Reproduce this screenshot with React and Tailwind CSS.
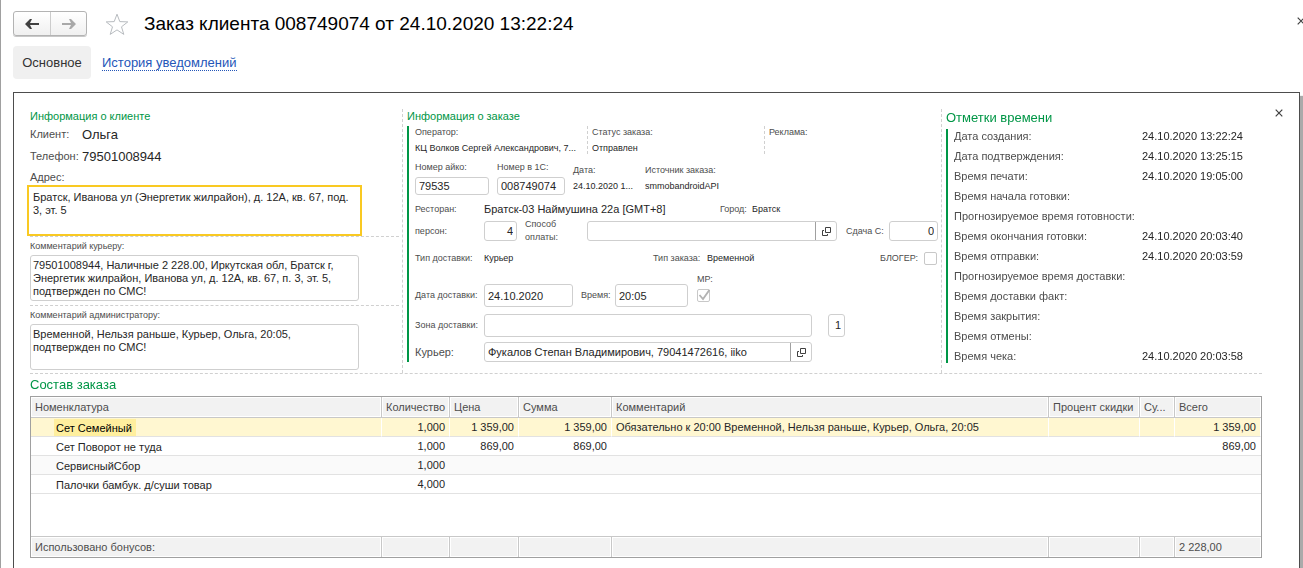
import React from "react";
import clsx from "clsx";

const TIMES = [
  ["Дата создания:", "24.10.2020 13:22:24"],
  ["Дата подтверждения:", "24.10.2020 13:25:15"],
  ["Время печати:", "24.10.2020 19:05:00"],
  ["Время начала готовки:", ""],
  ["Прогнозируемое время готовности:", ""],
  ["Время окончания готовки:", "24.10.2020 20:03:40"],
  ["Время отправки:", "24.10.2020 20:03:59"],
  ["Прогнозируемое время доставки:", ""],
  ["Время доставки факт:", ""],
  ["Время закрытия:", ""],
  ["Время отмены:", ""],
  ["Время чека:", "24.10.2020 20:03:58"],
];

const ROWS = [
  ["Сет Семейный", "1,000", "1 359,00", "1 359,00", "Обязательно к 20:00 Временной, Нельзя раньше, Курьер, Ольга, 20:05", "1 359,00"],
  ["Сет Поворот не туда", "1,000", "869,00", "869,00", "", "869,00"],
  ["СервисныйСбор", "1,000", "", "", "", ""],
  ["Палочки бамбук. д/суши товар", "4,000", "", "", "", ""],
];

const HEADS = ["Номенклатура", "Количество", "Цена", "Сумма", "Комментарий", "Процент скидки", "Су...", "Всего"];

function Arrow({ className }) {
  return (
    <svg viewBox="0 0 14 10" className={clsx("h-[10px] w-[14px]", className)} aria-hidden="true">
      <path d="M0 5 L5 0 H7 L5 4 H14 V6 H5 L7 10 H5 Z" fill="currentColor" />
    </svg>
  );
}

function Cross() {
  return (
    <svg viewBox="0 0 8 8" className="h-2 w-2 shrink-0" aria-hidden="true">
      <path d="M0.7 0.7 L7.3 7.3 M7.3 0.7 L0.7 7.3" stroke="#404040" strokeWidth="1.2" />
    </svg>
  );
}

function Label({ htmlFor, className, children }) {
  return (
    <label htmlFor={htmlFor} className={clsx("shrink-0 text-[#4d4d4d]", className)}>
      {children}
    </label>
  );
}

function Box({ id, value, className }) {
  return (
    <input
      id={id}
      defaultValue={value}
      className={clsx("rounded-[3px] border border-[#cfcfcf] bg-white px-[3px] text-[11px] text-[#262626] outline-none", className)}
    />
  );
}

function PickBox({ id, value, className }) {
  return (
    <div className={clsx("flex h-5 overflow-hidden rounded-[3px] border border-[#cfcfcf] bg-white", className)}>
      <input id={id} defaultValue={value} className="min-w-0 flex-1 px-[3px] text-[11px] text-[#262626] outline-none" />
      <button type="button" aria-label="Открыть" className="flex w-[21px] items-center justify-center border-l border-[#a0a0a0]">
        <svg viewBox="0 0 9 9" className="h-[9px] w-[9px]" fill="none" stroke="#404040" aria-hidden="true">
          <path d="M3.5 0.5 H8.5 V5.5 H3.5 Z M2 3.5 H0.5 V8.5 H5.5 V7" />
        </svg>
      </button>
    </div>
  );
}

function Field({ label, value, className }) {
  return (
    <div className={clsx("min-w-0", className)}>
      <div className="h-4 text-[#4d4d4d]">{label}</div>
      <div className="truncate text-[#262626]">{value}</div>
    </div>
  );
}

export default function App() {
  return (
    <div className="flex min-h-screen flex-col overflow-hidden border-l border-[#a0a0a0] bg-white font-['Liberation_Sans',Arial,sans-serif] text-[11px] leading-[13px] text-[#262626]">
      <header className="flex h-9 items-end pl-3">
        <div className="flex h-[25px] w-[74px] rounded-[3px] border border-[#b3b3b3] bg-gradient-to-b from-white to-[#f0f0f0] shadow-[0_1px_0_#c8c8c8]">
          <button type="button" aria-label="Назад" className="flex w-9 items-center justify-center text-[#404040]">
            <Arrow />
          </button>
          <button type="button" aria-label="Вперёд" className="flex flex-1 items-center justify-center border-l border-[#cccccc] text-[#a8a8a8]">
            <Arrow className="rotate-180" />
          </button>
        </div>
        <button type="button" aria-label="В избранное" className="ml-[18px]">
          <svg viewBox="0 0 24 23" className="h-[23px] w-6" fill="none" stroke="#b8bcc0" aria-hidden="true">
            <path d="M12 1.2 L14.8 8.6 L22.8 8.9 L16.5 13.8 L18.8 21.4 L12 16.9 L5.2 21.4 L7.5 13.8 L1.2 8.9 L9.2 8.6 Z" />
          </svg>
        </button>
        <h1 className="ml-[15px] flex-1 truncate text-[19px] leading-[24px] text-black">Заказ клиента 008749074 от 24.10.2020 13:22:24</h1>
        <button type="button" aria-label="Закрыть" className="-mr-[2px] mb-[11px]">
          <Cross />
        </button>
      </header>

      <nav className="mt-[10px] flex h-[33px] items-center gap-[11px] pl-3 text-[13px] leading-4">
        <a href="#main" className="flex h-full w-[78px] items-center justify-center rounded-[4px] bg-[#f0f0f0] text-[#333333]">Основное</a>
        <a href="#history" className="h-4 border-b border-dotted border-[#2456b8] text-[#2456b8]">История уведомлений</a>
      </nav>

      <main className="relative mr-[3px] ml-3 mt-[13px] flex-1 border border-b-0 border-[#4d4d4d] pt-4 pr-[37px] pb-[10px] pl-4 shadow-[3px_4px_1px_#aaaaaa]">
        <button type="button" aria-label="Закрыть форму" className="absolute top-4 right-4">
          <Cross />
        </button>

        <div className="grid grid-cols-[373fr_539fr_320fr] border-b border-dashed border-[#d0d0d0]">
          <section className="border-r border-dashed border-[#d0d0d0] pr-[3px] pb-[3px]">
            <h2 className="h-[15px] leading-[15px] text-[#009646]">Информация о клиенте</h2>
            <div className="flex h-5 items-center">
              <span className="w-[52px] text-[#4d4d4d]">Клиент:</span>
              <span className="text-[13px]">Ольга</span>
            </div>
            <div className="flex h-6 items-center">
              <span className="w-[52px] text-[#4d4d4d]">Телефон:</span>
              <span className="text-[13px]">79501008944</span>
            </div>
            <Label htmlFor="address" className="block h-[17px] leading-[18px]">Адрес:</Label>
            <div className="-ml-[3px] mr-[37px]">
              <textarea id="address" autoFocus defaultValue="Братск, Иванова ул (Энергетик жилрайон), д. 12А, кв. 67, под. 3, эт. 5" className="block h-[51px] w-full resize-none border-2 border-[#f9c922] p-1 outline-none" />
            </div>
            <div className="border-t border-dashed border-[#d0d0d0]">
              <Label htmlFor="courier-note" className="block h-[18px] text-[9px] leading-[18px]">Комментарий курьеру:</Label>
              <div className="mr-10">
                <textarea id="courier-note" defaultValue="79501008944, Наличные 2 228.00, Иркутская обл, Братск г, Энергетик жилрайон, Иванова ул, д. 12А, кв. 67, п. 3, эт. 5, подтвержден по СМС!" className="block h-[46px] w-full resize-none overflow-hidden rounded-[3px] border border-[#cfcfcf] px-[2px] py-[3px] outline-none" />
              </div>
            </div>
            <div className="mt-1 border-t border-dashed border-[#d0d0d0]">
              <Label htmlFor="admin-note" className="block h-[18px] text-[9px] leading-[18px]">Комментарий администратору:</Label>
              <div className="mr-10">
                <textarea id="admin-note" defaultValue="Временной, Нельзя раньше, Курьер, Ольга, 20:05, подтвержден по СМС!" className="block h-[46px] w-full resize-none overflow-hidden rounded-[3px] border border-[#cfcfcf] px-[2px] py-[3px] outline-none" />
              </div>
            </div>
          </section>

          <section className="min-w-0 border-r border-dashed border-[#d0d0d0] pr-[3px] pl-1 text-[9px]">
            <h2 className="h-[17px] text-[11px] leading-[15px] text-[#009646]">Информация о заказе</h2>
            <div className="border-l-2 border-[#009646] pl-[6px]">
              <div className="flex h-7">
                <Field label="Оператор:" value="КЦ Волков Сергей Александрович, 7..." className="w-[173px] border-r border-dashed border-[#d0d0d0]" />
                <Field label="Статус заказа:" value="Отправлен" className="w-[177px] border-r border-dashed border-[#d0d0d0] pl-1" />
                <Field label="Реклама:" value="" className="flex-1 pl-1" />
              </div>
              <div className="flex h-[46px] pt-[7px]">
                <div className="mr-2 w-[74px]">
                  <Label htmlFor="aiko" className="block h-4">Номер айко:</Label>
                  <Box id="aiko" value="79535" className="h-[18px] w-full" />
                </div>
                <div className="mr-2 w-[68px]">
                  <Label htmlFor="num1c" className="block h-4">Номер в 1С:</Label>
                  <Box id="num1c" value="008749074" className="h-[18px] w-full" />
                </div>
                <Field label="Дата:" value="24.10.2020 1..." className="w-[72px] pt-[3px]" />
                <Field label="Источник заказа:" value="smmobandroidAPI" className="flex-1 pt-[3px]" />
              </div>
              <div className="flex h-[18px] items-center">
                <span className="w-[69px] text-[#4d4d4d]">Ресторан:</span>
                <span className="w-[236px] text-[11px]">Братск-03 Наймушина 22а [GMT+8]</span>
                <span className="w-8 text-[#4d4d4d]">Город:</span>
                <span>Братск</span>
              </div>
              <div className="flex h-[26px] items-center">
                <Label htmlFor="persons" className="w-[69px]">персон:</Label>
                <Box id="persons" value="4" className="mr-2 h-5 w-[33px] text-right" />
                <Label htmlFor="payment" className="w-[62px]">Способ<br />оплаты:</Label>
                <PickBox id="payment" value="" className="mr-[9px] min-w-0 flex-1" />
                <Label htmlFor="change" className="w-[43px]">Сдача С:</Label>
                <Box id="change" value="0" className="h-5 w-[49px] px-[2px] text-right" />
              </div>
              <div className="flex h-7 items-center">
                <span className="w-[69px] text-[#4d4d4d]">Тип доставки:</span>
                <span className="w-[169px]">Курьер</span>
                <span className="w-[54px] text-[#4d4d4d]">Тип заказа:</span>
                <span className="flex-1">Временной</span>
                <Label htmlFor="blogger" className="mr-[6px]">БЛОГЕР:</Label>
                <input id="blogger" type="checkbox" className="mr-px h-[13px] w-[13px] appearance-none rounded-[2px] border border-[#c8c8c8]" />
              </div>
              <div className="flex h-9 items-end pb-px">
                <Label htmlFor="ddate" className="w-[69px] pb-[5px]">Дата доставки:</Label>
                <Box id="ddate" value="24.10.2020" className="mr-2 h-[23px] w-[89px]" />
                <Label htmlFor="dtime" className="w-[34px] pb-[5px]">Время:</Label>
                <Box id="dtime" value="20:05" className="mr-[9px] h-[23px] w-[73px]" />
                <div className="pb-[5px]">
                  <Label htmlFor="mp" className="block h-4">МР:</Label>
                  <div className="relative h-[13px] w-[13px]">
                    <input id="mp" type="checkbox" defaultChecked className="block h-[13px] w-[13px] appearance-none rounded-[2px] border border-[#c8c8c8]" />
                    <svg viewBox="0 0 13 13" className="pointer-events-none absolute inset-0 h-[13px] w-[13px]" aria-hidden="true">
                      <path d="M2.5 6 L6 10 L12.5 0.8" fill="none" stroke="#b3b3b3" strokeWidth="1.8" />
                    </svg>
                  </div>
                </div>
              </div>
              <div className="flex h-[34px] items-center">
                <Label htmlFor="zone" className="w-[69px]">Зона доставки:</Label>
                <Box id="zone" value="" className="mr-4 h-[23px] min-w-0 flex-1" />
                <input aria-label="Номер зоны" defaultValue="1" className="mr-[93px] h-[23px] w-[17px] rounded-[3px] border border-[#cfcfcf] px-[3px] text-right text-[11px] outline-none" />
              </div>
              <div className="flex h-5 items-center">
                <Label htmlFor="courier" className="w-[69px] text-[11px]">Курьер:</Label>
                <PickBox id="courier" value="Фукалов Степан Владимирович, 79041472616, iiko" className="mr-[126px] min-w-0 flex-1" />
              </div>
            </div>
          </section>

          <section className="min-w-0 pl-1">
            <h2 className="h-5 text-[13px] leading-[17px] text-[#009646]">Отметки времени</h2>
            <dl className="flex flex-col gap-[6px] border-l-2 border-[#009646] pl-[6px] leading-[14px]">
              {TIMES.map(([k, v]) => (
                <div key={k} className="flex h-[14px]">
                  <dt className="w-[188px] shrink-0 text-[#4d4d4d]">{k}</dt>
                  <dd>{v}</dd>
                </div>
              ))}
            </dl>
          </section>
        </div>

        <h2 className="h-[22px] text-[13px] leading-[21px] text-[#009646]">Состав заказа</h2>
        <table className="w-full table-fixed border-separate border-spacing-0 border border-[#a0a0a0]">
          <colgroup>
            <col className="w-[351px]" />
            <col className="w-[68px]" />
            <col className="w-[69px]" />
            <col className="w-[93px]" />
            <col />
            <col className="w-[91px]" />
            <col className="w-[35px]" />
            <col className="w-[86px]" />
          </colgroup>
          <thead>
            <tr>
              {HEADS.map((h, i) => (
                <th key={h} className={clsx("h-[21px] overflow-hidden border-b border-[#c8c8c8] bg-[#f2f2f2] pl-1 text-left font-normal whitespace-nowrap text-[#4d4d4d] shadow-[inset_0_0_0_1px_#fff]", i < 7 && "border-r")}>{h}</th>
              ))}
            </tr>
          </thead>
          <tbody>
            {ROWS.map(([name, qty, price, sum, note, total], r) => {
              const cell = clsx("h-[19px] truncate border-b border-b-[#e2e2e2] pt-px", r === 0 && "border-r border-r-white bg-[#fff7d1] px-1", r !== 0 && "pr-[5px] pl-1", r === 2 && "bg-[#fafafa]");
              return (
                <tr key={name}>
                  <td className={clsx("h-[19px] truncate border-b border-b-[#e2e2e2] py-0 pl-[23px]", r === 0 && "border-r border-r-white bg-[#fff7d1]", r === 2 && "bg-[#fafafa]")}>
                    <span className={clsx("block h-[17px] w-fit px-[2px] leading-[18px]", r === 0 && "bg-[#ffef9e] pr-1 text-black")}>{name}</span>
                  </td>
                  <td className={clsx(cell, "text-right")}>{qty}</td>
                  <td className={clsx(cell, "text-right")}>{price}</td>
                  <td className={clsx(cell, "text-right")}>{sum}</td>
                  <td className={cell}>{note}</td>
                  <td className={cell} />
                  <td className={cell} />
                  <td className={clsx(cell, "text-right")}>{total}</td>
                </tr>
              );
            })}
            <tr>
              <td colSpan={8} className="h-[42px]" />
            </tr>
          </tbody>
          <tfoot>
            <tr>
              {["Использовано бонусов:", "", "", "", "", "", "", "2 228,00"].map((t, i) => (
                <td key={i} className={clsx("h-[21px] truncate border-t border-[#c8c8c8] bg-[#f2f2f2] px-1 text-[#4d4d4d] shadow-[inset_0_0_0_1px_#fff]", i < 7 && "border-r")}>{t}</td>
              ))}
            </tr>
          </tfoot>
        </table>
      </main>
    </div>
  );
}
